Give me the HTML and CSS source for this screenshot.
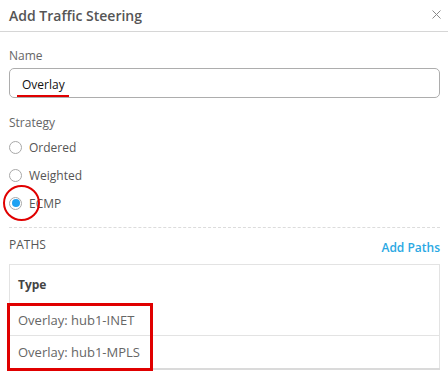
FILE: index.html
```html
<!DOCTYPE html>
<html lang="en">
<head>
    <meta charset="UTF-8">
    <meta name="viewport" content="width=device-width, initial-scale=1.0">
    <title>Add Traffic Steering</title>
    <link rel="stylesheet" href="styles.css">
</head>
<body>
    <div class="dialog">
        <div class="dialog-header">
            <h2>Add Traffic Steering</h2>
            <button class="close" aria-label="Close">
                <svg width="9" height="9" viewBox="0 0 9 9"><path d="M0.5 0.5L8.5 8.5M8.5 0.5L0.5 8.5" stroke="#8a8a8a" stroke-width="1" fill="none"/></svg>
            </button>
        </div>

        <div class="dialog-body">
            <label class="field-label" for="name">Name</label>
            <input class="text-input" type="text" id="name" value="Overlay">

            <div class="field-label strategy">Strategy</div>
            <label class="radio-row"><input type="radio" name="strategy"><span class="radio"></span>Ordered</label>
            <label class="radio-row"><input type="radio" name="strategy"><span class="radio"></span>Weighted</label>
            <label class="radio-row"><input type="radio" name="strategy" checked><span class="radio"></span>ECMP</label>

            <div class="divider"></div>

            <div class="paths-head">
                <span class="paths-title">PATHS</span>
                <a class="add-link" href="#">Add Paths</a>
            </div>

            <table class="paths">
                <thead>
                    <tr><th>Type</th></tr>
                </thead>
                <tbody>
                    <tr class="row-first"><td>Overlay: hub1-INET</td></tr>
                    <tr class="row-last"><td>Overlay: hub1-MPLS</td></tr>
                </tbody>
            </table>
        </div>

        <!-- annotations -->
        <div class="mark mark-underline"></div>
        <div class="mark mark-circle"></div>
        <div class="mark mark-box"></div>
    </div>
</body>
</html>
```

FILE: styles.css
```css
body {
    margin: 0;
    background: #fff;
    font-family: "Open Sans", "Liberation Sans", sans-serif;
    color: #666;
}
.dialog {
    position: relative;
    width: 448px;
    height: 388px;
    overflow: hidden;
}
.dialog-header {
    display: flex;
    align-items: center;
    justify-content: space-between;
    height: 31px;
    padding: 0 7px 0 9px;
    border-bottom: 1px solid #d6d6d6;
}
.dialog-header h2 {
    margin: 0;
    font-size: 14px;
    font-weight: 600;
    color: #555;
}
.close {
    background: none;
    border: none;
    padding: 0;
    width: 9px;
    height: 9px;
    margin-top: -3px;
    display: flex;
}
.dialog-body {
    padding: 0 8px 0 9px;
}
.field-label {
    display: block;
    margin-top: 15px;
    font-size: 12px;
    line-height: 18px;
    color: #666;
}
.text-input {
    display: block;
    box-sizing: border-box;
    width: 100%;
    height: 30px;
    margin-top: 3px;
    padding: 2px 12px 0;
    border: 1px solid #adadad;
    border-radius: 5px;
    font-family: inherit;
    font-size: 12px;
    color: #111;
    outline: none;
}
.strategy {
    margin-top: 16px;
    margin-bottom: 1px;
}
.radio-row {
    display: flex;
    align-items: center;
    gap: 7px;
    height: 28px;
    font-size: 12px;
    color: #555;
}
.radio-row input {
    display: none;
}
.radio {
    box-sizing: border-box;
    width: 13px;
    height: 13px;
    border: 1px solid #a8a8a8;
    border-radius: 50%;
    background: #fff;
    display: flex;
    align-items: center;
    justify-content: center;
}
.radio-row input:checked + .radio::after {
    content: "";
    width: 8px;
    height: 8px;
    border-radius: 50%;
    background: #1ea1f2;
}
.divider {
    margin-top: 10px;
    border-top: 1px dashed #dcdcdc;
}
.paths-head {
    display: flex;
    justify-content: space-between;
    align-items: flex-start;
    margin-top: 9px;
}
.paths-title {
    font-size: 12px;
    line-height: 16px;
    color: #555;
}
.add-link {
    margin-top: 2px;
    font-size: 12px;
    line-height: 18px;
    font-weight: 600;
    color: #2aa8e3;
    text-decoration: none;
}
.paths {
    width: 100%;
    margin-top: 7px;
    border-collapse: collapse;
    border: 1px solid #e3e3e3;
    border-bottom: 2px solid #dadada;
}
.paths th {
    height: 39px;
    padding: 0 8px;
    text-align: left;
    font-size: 12px;
    font-weight: 700;
    color: #444;
}
.paths td {
    padding: 0 8px;
    font-size: 13px;
    color: #666;
}
.row-first td {
    height: 31px;
    border-bottom: 1px solid #e3e3e3;
}
.row-last td {
    height: 32px;
}
.mark {
    position: absolute;
    box-sizing: border-box;
}
.mark-underline {
    left: 17px;
    top: 95px;
    width: 52px;
    height: 2px;
    background: #e00000;
}
.mark-circle {
    left: 3px;
    top: 185px;
    width: 37px;
    height: 36px;
    border: 2px solid #e00000;
    border-radius: 50%;
}
.mark-box {
    left: 7px;
    top: 303px;
    width: 146px;
    height: 68px;
    border: 3px solid #e00000;
}
```
